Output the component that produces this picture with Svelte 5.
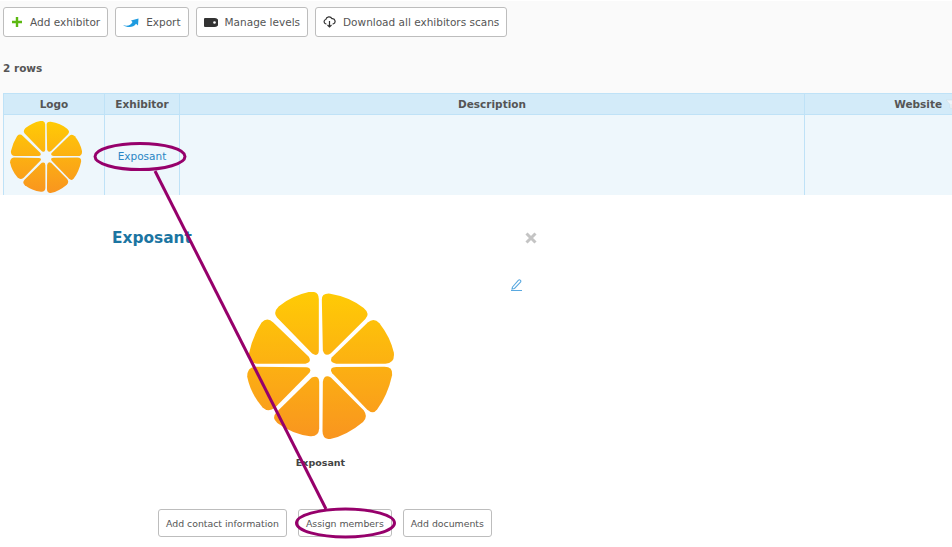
<script>
    const headers = ["Logo", "Exhibitor", "Description", "Website"];
    const actions = ["Add contact information", "Assign members", "Add documents"];
    const slices = [
        "M266 60 L266 212 Q265 232 246 221 L141 113 Q128 98 146 80 Q185 48 236 37 Q267 32 266 60 Z",
        "M275 60 Q274 40 300 42 Q360 52 400 85 Q420 102 405 118 L302 220 Q284 232 278 212 Z",
        "M305 232 L412 128 Q430 112 447 130 Q480 172 490 218 Q494 250 465 251 L318 251 Q296 248 305 232 Z",
        "M318 261 L462 260 Q488 260 485 285 Q472 345 440 388 Q428 404 410 388 L306 280 Q294 262 318 261 Z",
        "M302 292 L400 390 Q414 410 398 425 Q350 465 300 476 Q276 478 277 450 L278 305 Q282 282 302 292 Z",
        "M245 292 Q266 284 267 305 L267 445 Q266 470 240 468 Q185 460 142 428 Q124 412 140 395 Z",
        "M75 260 L228 262 Q246 264 238 278 L135 383 Q115 398 98 382 Q62 340 52 290 Q52 262 75 260 Z",
        "M130 128 L236 230 Q246 248 226 251 L82 251 Q55 250 57 222 Q68 170 95 128 Q112 110 130 128 Z",
    ];
</script>

{#snippet logo(cls, id)}
    <svg class={cls} viewBox="52 37 438 439" aria-label="Logo" role="img">
        <defs>
            <linearGradient {id} gradientUnits="userSpaceOnUse" x1="0" y1="37" x2="0" y2="476">
                <stop offset="0" stop-color="#ffcb05" />
                <stop offset="1" stop-color="#f9951f" />
            </linearGradient>
        </defs>
        {#each slices as d}
            <path {d} fill="url(#{id})" />
        {/each}
    </svg>
{/snippet}

<div class="page">
    <section class="top">
        <div class="toolbar">
            <button>
                <svg width="12" height="12" viewBox="0 0 12 12"><path d="M6 1v10M1 6h10" stroke="#5cb811" stroke-width="2.4" fill="none" /></svg>
                Add exhibitor
            </button>
            <button>
                <svg width="16" height="11" viewBox="0 0 16 11"><path d="M0 8C4 9.500 8 8.500 9.500 5L8 3.500 15.500 1.500 15 8.500l-2-1.700C10.500 11 4 11 0 8Z" fill="#1e9be0" /></svg>
                Export
            </button>
            <button>
                <svg width="14" height="9" viewBox="0 0 14 9"><path d="M1 0h9.500a3.500 3.500 0 0 1 0 9H1a1 1 0 0 1-1-1V1a1 1 0 0 1 1-1Z" fill="#333" /><circle cx="10.500" cy="4.500" r="1.300" fill="#fff" /></svg>
                Manage levels
            </button>
            <button>
                <svg width="13" height="12" viewBox="0 0 13 12"><path d="M3.500 8H3A2.300 2.300 0 0 1 2.800 3.500 3.300 3.300 0 0 1 9 2.700 2.700 2.700 0 0 1 10 8h-.5" stroke="#333" stroke-width="1.200" fill="none" /><path d="M6.500 5v6M4.500 9l2 2 2-2" stroke="#333" stroke-width="1.200" fill="none" /></svg>
                Download all exhibitors scans
            </button>
        </div>
        <p class="count">2 rows</p>
        <table>
            <thead>
                <tr>
                    {#each headers as h}
                        <th>
                            {h}
                            {#if h === "Website"}
                                <svg class="filter" width="10" height="10" viewBox="0 0 10 10"><path d="M0 1h10L6 5.500V10L4 9V5.500Z" fill="#eef6fb" stroke="#cfdde5" stroke-width=".6" /></svg>
                            {/if}
                        </th>
                    {/each}
                </tr>
            </thead>
            <tbody>
                <tr>
                    <td class="logo-cell">{@render logo("small", "grad-small")}</td>
                    <td class="name-cell"><a href="#top">Exposant</a></td>
                    <td></td>
                    <td></td>
                </tr>
            </tbody>
        </table>
    </section>

    <section class="detail">
        <header>
            <h2>Exposant</h2>
            <svg class="close" width="12" height="12" viewBox="0 0 12 12"><path d="M1.500 1.500l9 9M10.500 1.500l-9 9" stroke="#c4c4c4" stroke-width="3" fill="none" /></svg>
        </header>
        <div class="edit">
            <svg width="13" height="13" viewBox="0 0 13 13"><path d="M2.500 9l6-6.800a1.100 1.100 0 0 1 1.700 0l.3.300a1.100 1.100 0 0 1 0 1.600L4.500 10.500l-2.500.5ZM1 12.500h11" stroke="#5aa9e0" stroke-width="1.100" fill="none" /></svg>
        </div>
        <figure>
            {@render logo("big", "grad-big")}
            <figcaption>Exposant</figcaption>
        </figure>
        <div class="actions">
            {#each actions as label}<button>{label}</button>{/each}
        </div>
    </section>

    <svg class="notes" width="952" height="547" viewBox="0 0 952 547">
        <g stroke="#96006b" stroke-width="3" fill="none">
            <ellipse cx="140" cy="156.500" rx="45" ry="13" />
            <path d="M155 171 326 509" />
            <ellipse cx="345.500" cy="523" rx="49" ry="14" />
        </g>
    </svg>
</div>

<style>
    :global(body) {
        background: #fff;
        overflow: hidden;
    }
    .page {
        position: relative;
        width: 952px;
        height: 547px;
        overflow: hidden;
        font-family: "DejaVu Sans", Verdana, sans-serif;
        font-size: 10.500px;
        color: #555;
    }
    .top {
        height: 188px;
        margin-top: 1px;
        padding: 6px 0 0 3px;
        background: #fafafa;
    }
    .toolbar {
        display: flex;
        gap: 7px;
    }
    button {
        display: flex;
        align-items: center;
        height: 30px;
        padding: 0 7px;
        background: #fff;
        border: 1px solid #bdbdbd;
        border-radius: 3px;
        font: inherit;
        color: #555;
    }
    .toolbar button {
        gap: 7px;
    }
    .count {
        margin: 25px 0 0;
        height: 31px;
        font-weight: bold;
        line-height: 13px;
    }
    table {
        width: 1043px;
        table-layout: fixed;
        border-collapse: collapse;
        background: #eef7fc;
    }
    th:nth-child(1) { width: 100px; }
    th:nth-child(2) { width: 74px; }
    th:nth-child(3) { width: 624px; }
    th {
        height: 20px;
        padding: 0;
        background: #d3ebf9;
        border: 1px solid #bfe2f7;
        color: #555;
    }
    .filter {
        vertical-align: -1px;
    }
    td {
        height: 80px;
        padding: 0;
        text-align: center;
        border-left: 1px solid #bfe2f7;
        border-right: 1px solid #bfe2f7;
    }
    .logo-cell {
        line-height: 0;
        padding: 3px 16px 0 0;
        height: 77px;
    }
    .name-cell {
        padding-top: 2px;
        height: 78px;
    }
    a {
        color: #2a86c4;
        text-decoration: none;
    }
    .small {
        width: 72px;
        height: 72px;
    }
    .detail {
        width: 426px;
        margin-left: 112px;
    }
    header {
        display: flex;
        align-items: center;
        justify-content: space-between;
        height: 23px;
        margin-top: 31px;
        padding-right: 1px;
    }
    h2 {
        margin: 0;
        font-size: 15.400px;
        color: #1b75a2;
    }
    .edit {
        display: flex;
        justify-content: flex-end;
        margin-top: 29px;
        padding-right: 15px;
        height: 13px;
    }
    figure {
        display: flex;
        flex-direction: column;
        align-items: center;
        width: 417px;
        margin: 1px 0 0;
    }
    .big {
        width: 147px;
        height: 147px;
    }
    figcaption {
        margin-top: 17px;
        font-size: 9.500px;
        font-weight: bold;
        line-height: 13px;
        color: #444;
    }
    .actions {
        display: flex;
        gap: 11px;
        margin: 40px 0 0 46px;
    }
    .actions button {
        height: 28px;
        font-size: 9.350px;
    }
    .notes {
        position: absolute;
        inset: 0;
        pointer-events: none;
    }
</style>
